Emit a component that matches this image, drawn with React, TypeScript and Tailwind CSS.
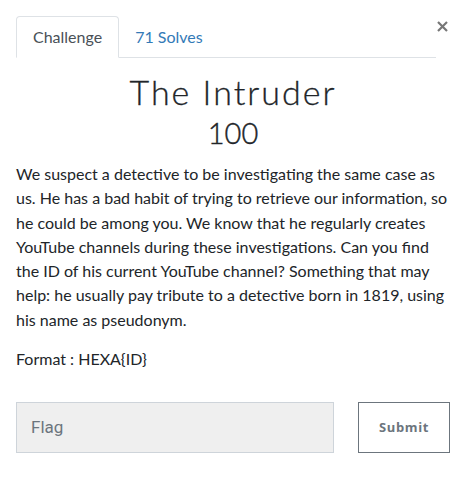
import React from 'react';

const description =
  'We suspect a detective to be investigating the same case as us. He has a bad habit of trying to retrieve our information, so he could be among you. We know that he regularly creates YouTube channels during these investigations. Can you find the ID of his current YouTube channel? Something that may help: he usually pay tribute to a detective born in 1819, using his name as pseudonym.';

const App = () => {
  return (
    <div className="w-[466px] h-[485px] bg-white px-4 pt-4 font-['Lato','Noto_Sans',sans-serif] text-[#212529]">
      <div className="flex items-start">
        <div className="flex flex-1 border-b border-[#dee2e6] h-[42px]">
          <div className="h-[42px] px-4 flex items-center text-[16px] text-[#495057] bg-white border border-[#dee2e6] border-b-white rounded-t-[4px] -mb-px">
            Challenge
          </div>
          <div className="h-[42px] px-4 flex items-center text-[16px] text-[#337ab7]">71 Solves</div>
        </div>
        <div className="w-[14px] flex justify-end">
          <svg width="11" height="11" viewBox="0 0 11 11" className="mt-[5px] mr-[2px]">
            <path d="M1 1L10 10M10 1L1 10" stroke="#777" strokeWidth="2.2" />
          </svg>
        </div>
      </div>

      <div className="flex flex-col items-center mt-[14px]">
        <h1 className="text-[34px] leading-[40px] tracking-[2px] font-light text-[#212529] [-webkit-text-stroke:0.3px_#212529]">
          The Intruder
        </h1>
        <div className="text-[29px] leading-[36px] mt-[3px] font-light text-[#212529] [-webkit-text-stroke:0.4px_#212529]">
          100
        </div>
      </div>

      <p className="mt-[11px] text-[16px] leading-[24.3px] text-[#212529]">{description}</p>
      <p className="mt-[15px] text-[16px] leading-[24px] text-[#212529]">Format : HEXA{'{'}ID{'}'}</p>

      <div className="flex items-center gap-6 mt-[31px]">
        <div className="flex-1 h-[51px] bg-[#efefef] border border-[#ced4da] flex items-center px-[14px] font-['Roboto',sans-serif] text-[17px] text-[#6c757d]">
          Flag
        </div>
        <div className="w-[92px] h-[51px] border border-[#6c757d] flex items-center justify-center font-['Open_Sans',sans-serif] font-bold text-[13px] tracking-[0.6px] text-[#6c757d]">
          Submit
        </div>
      </div>
    </div>
  );
};

export default App;
